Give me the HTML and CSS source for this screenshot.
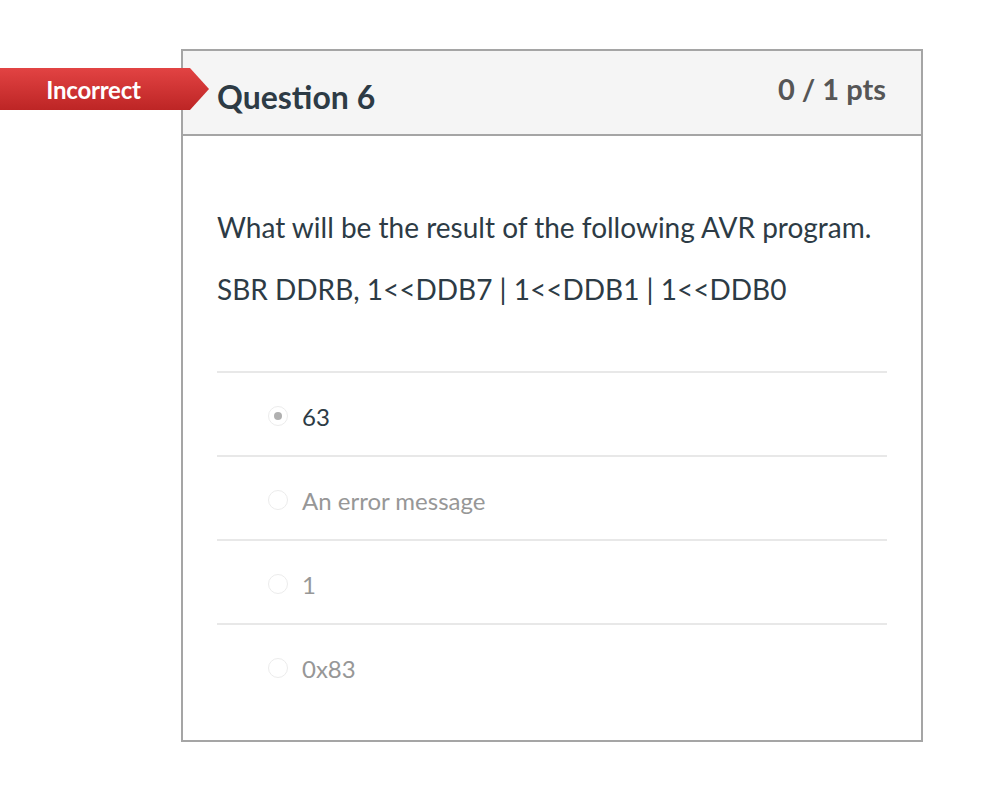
FILE: index.html
```html
<!DOCTYPE html>
<html>
<head>
<meta charset="utf-8">
<link rel="stylesheet" href="styles.css">
</head>
<body>
<div class="card">
  <div class="badge"><span>Incorrect</span></div>
  <div class="header">
    <h2 class="title">Question 6</h2>
    <div class="pts">0 / 1 pts</div>
  </div>
  <div class="content">
    <div class="question">
      <p>What will be the result of the following AVR program.</p>
      <p>SBR DDRB, 1&lt;&lt;DDB7 | 1&lt;&lt;DDB1 | 1&lt;&lt;DDB0</p>
    </div>
    <div class="answers">
      <div class="answer selected"><span class="radio"></span><span class="label">63</span></div>
      <div class="answer"><span class="radio"></span><span class="label">An error message</span></div>
      <div class="answer"><span class="radio"></span><span class="label">1</span></div>
      <div class="answer"><span class="radio"></span><span class="label">0x83</span></div>
    </div>
  </div>
</div>
</body>
</html>
```

FILE: styles.css
```css
html, body {
  margin: 0;
  padding: 0;
  background: #fff;
}
body {
  font-family: Lato, "Open Sans", sans-serif;
  color: #2d3b45;
  padding: 49px 0 0 181px;
}
.card {
  position: relative;
  width: 738px;
  height: 689px;
  border: 2px solid #a5a5a5;
}
.badge {
  position: absolute;
  left: -183px;
  top: 17px;
  width: 209px;
  height: 42px;
  background: linear-gradient(#e24343, #bd2525);
  clip-path: polygon(0 0, 190px 0, 209px 50%, 190px 100%, 0 100%);
  display: flex;
  align-items: center;
  justify-content: center;
  padding-right: 22px;
  box-sizing: border-box;
}
.badge span {
  color: #fff;
  font-size: 24px;
  font-weight: 700;
  letter-spacing: -0.2px;
}
.header {
  height: 83px;
  background: #f5f5f5;
  border-bottom: 2px solid #a5a5a5;
  display: flex;
  justify-content: space-between;
  align-items: flex-start;
  padding: 0 35px 0 34px;
}
.title {
  margin: 28px 0 0;
  font-size: 32px;
  font-weight: 700;
  line-height: 36px;
  color: #2d3b45;
}
.pts {
  margin-top: 22px;
  font-size: 29px;
  font-weight: 700;
  line-height: 32px;
  color: #565656;
}
.content {
  padding: 72px 34px 32px;
}
.question p {
  margin: 0 0 23px;
  font-size: 28px;
  line-height: 39px;
}
.question {
  padding-bottom: 39px;
}
.answer {
  border-top: 2px solid #e8e8e8;
  display: flex;
  align-items: center;
  padding-left: 51px;
  padding-top: 4px;
  box-sizing: border-box;
  height: 84px;
}
.radio {
  width: 18px;
  height: 18px;
  border: 1px solid #ececec;
  border-radius: 50%;
  margin-right: 14px;
  position: relative;
  box-sizing: content-box;
}
.selected .radio::after {
  content: "";
  position: absolute;
  left: 5px;
  top: 5px;
  width: 8px;
  height: 8px;
  border-radius: 50%;
  background: #b0b0b0;
}
.label {
  font-size: 24px;
  color: #979797;
}
.selected .label {
  color: #2d3b45;
}
```
